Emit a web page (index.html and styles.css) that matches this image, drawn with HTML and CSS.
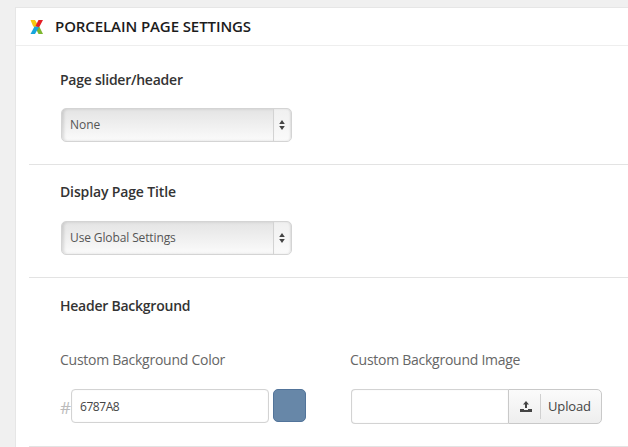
FILE: index.html
```html
<!DOCTYPE html>
<html lang="en">
<head>
<meta charset="utf-8">
<title>Porcelain Page Settings</title>
<link rel="stylesheet" href="styles.css">
</head>
<body>
<main class="panel">
  <header class="panel-header">
    <svg class="logo" width="14" height="16" viewBox="0 0 14 16">
      <path d="M.5 1H5l3 5-2 4-3-3z" fill="#f6c80e"/>
      <path d="M8 6.500 6 10l2.500 5h4.500l-3.500-7z" fill="#7db72f"/>
      <path d="M8.500 1H13L9 8.500 5.500 7z" fill="#e41f26"/>
      <path d="M4.500 7.500 9 8 5 15H.5z" fill="#16a5dc"/>
    </svg>
    <h1 class="title">PORCELAIN PAGE SETTINGS</h1>
  </header>
  <section class="row">
    <h2 class="label label-slider">Page slider/header</h2>
    <div class="select"><span class="value">None</span><span class="arrows"><svg width="6" height="10" viewBox="0 0 6 10"><path d="M3 0 5.800 4H.2zM3 10 .2 6h5.600z" fill="#444"/></svg></span></div>
  </section>
  <section class="row row-title">
    <h2 class="label label-title">Display Page Title</h2>
    <div class="select"><span class="value value-global">Use Global Settings</span><span class="arrows"><svg width="6" height="10" viewBox="0 0 6 10"><path d="M3 0 5.800 4H.2zM3 10 .2 6h5.600z" fill="#444"/></svg></span></div>
  </section>
  <section class="row row-background">
    <h2 class="label label-bg">Header Background</h2>
    <div class="columns">
      <div class="column">
        <h3 class="sublabel">Custom Background Color</h3>
        <div class="control"><span class="hash">#</span><span class="input color-input">6787A8</span><span class="swatch"></span></div>
      </div>
      <div class="column">
        <h3 class="sublabel">Custom Background Image</h3>
        <div class="control"><span class="input file-input"></span><span class="upload"><span class="upload-icon"><svg width="12" height="12" viewBox="0 0 12 12"><path d="M6 0 9 3.500H7V7H5V3.500H3zM0 8h4v1h4V8h4v3H0z" fill="#444"/></svg></span><span class="upload-text">Upload</span></span></div>
      </div>
    </div>
  </section>
</main>
</body>
</html>
```
FILE: styles.css
```css
* { box-sizing: border-box; }
body {
  margin: 0;
  height: 447px;
  overflow: hidden;
  padding: 7px 0 0 15px;
  background: #f0f0f0;
  font-family: "Open Sans", sans-serif;
  color: #333;
}
h1, h2, h3 { margin: 0; white-space: nowrap; }
.panel {
  height: 460px;
  background: #fff;
  border: 1px solid #e6e6e6;
  border-right: 0;
}
.panel-header {
  display: flex;
  align-items: center;
  height: 38px;
  padding-left: 14px;
  border-bottom: 1px solid #eee;
}
.title {
  margin: 0 0 1px 11px;
  font-size: 15px;
  line-height: 20px;
  font-weight: 600;
  letter-spacing: -.09px;
  color: #1c1c1c;
}
.row {
  height: 113px;
  margin-left: 13px;
  padding: 18px 0 0 31px;
  border-bottom: 1px solid #e3e3e3;
}
.row:nth-of-type(1) { height: 119px; padding-top: 24px; }
.row-background { height: 169px; }
.label {
  height: 20px;
  font-size: 14px;
  line-height: 20px;
  font-weight: 600;
  letter-spacing: -.24px;
}
.label-title { letter-spacing: -.14px; }
.select {
  display: flex;
  width: 231px;
  height: 34px;
  margin: 18px 0 0 1px;
  border: 1px solid #d4d4d4;
  border-radius: 5px;
  background: linear-gradient(#e4e4e4, #fbfbfb);
  box-shadow: inset 2px 0 3px rgba(0, 0, 0, .12);
}
.row-title { padding-top: 17px; }
.row-title .select { margin-top: 19px; }
.value {
  flex: 1;
  padding-left: 8px;
  font-size: 12px;
  line-height: 32px;
  color: #555;
}
.value-global { letter-spacing: -.12px; }
.arrows {
  display: flex;
  width: 18px;
  align-items: center;
  justify-content: center;
  padding-right: 1px;
  border-left: 1px solid #d3d3d3;
  border-radius: 0 4px 4px 0;
  background: linear-gradient(#f0f0f0, #fafafa);
  box-shadow: inset -1px 0 2px rgba(0, 0, 0, .1);
}
.columns { display: flex; margin-top: 34px; }
.column { width: 290px; flex-shrink: 0; }
.sublabel {
  font-size: 14px;
  line-height: 20px;
  font-weight: 400;
  letter-spacing: -.26px;
  color: #666;
}
.control { display: flex; margin-top: 19px; }
.hash {
  width: 11px;
  padding-top: 7px;
  font-size: 17px;
  line-height: 24px;
  color: #bbb;
}
.input {
  height: 34px;
  border: 1px solid #d3d3d3;
  border-radius: 4px;
  background: #fff;
  box-shadow: inset 0 0 1px #ddd;
}
.color-input {
  width: 198px;
  padding-left: 8px;
  font-size: 12px;
  line-height: 33px;
  letter-spacing: -.45px;
  color: #444;
}
.swatch {
  width: 33px;
  height: 33px;
  margin-left: 4px;
  border: 1px solid #52749a;
  border-radius: 5px;
  background: #6787a8;
}
.file-input {
  width: 157px;
  height: 35px;
  margin-left: 1px;
  border-right: 0;
  border-radius: 4px 0 0 4px;
}
.upload {
  display: flex;
  width: 94px;
  height: 35px;
  align-items: center;
  border: 1px solid #c9c9c9;
  border-radius: 0 5px 5px 0;
  background: linear-gradient(#fbfbfb, #eee);
}
.upload-icon {
  display: flex;
  width: 32px;
  height: 25px;
  align-items: center;
  justify-content: center;
  padding-left: 2px;
  border-right: 1px solid #d0d0d0;
}
.upload-text {
  padding-left: 7px;
  font-size: 13px;
  line-height: 33px;
  letter-spacing: -.15px;
  color: #444;
}
```
